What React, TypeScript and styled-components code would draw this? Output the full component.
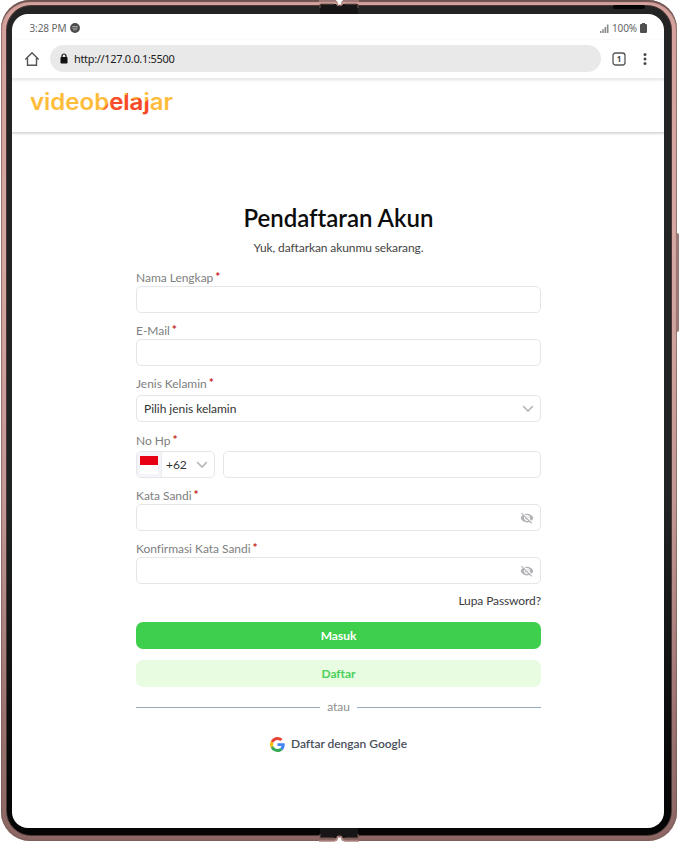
import React from 'react';
import styled, { createGlobalStyle, css } from 'styled-components';

const GlobalStyle = createGlobalStyle`
  *, *::before, *::after { box-sizing: border-box; }
  body { margin: 0; background: #fff; overflow: hidden; }
  button, input { font: inherit; letter-spacing: inherit; }
`;

const Device = styled.div`
  position: relative;
  width: 679px;
  height: 842px;
  padding: 0 2px 1px 1px;
  font-family: Lato, 'Liberation Sans', sans-serif;
`;

const Shell = styled.div`
  height: 841px;
  padding: 5px;
  border-radius: 29px;
  background: linear-gradient(180deg, #d5a29d 0%, #d5a8a3 30%, #c29894 60%, #9b7471 85%, #8b6663 100%);
  box-shadow: inset 0 0 1px 1px #70565490, inset 0 2px 1px #69504e;
`;

const Bezel = styled.div`
  height: 831px;
  padding: 8px 7px 7px 5px;
  border: 1px solid #4c3837;
  border-radius: 25px;
  background: linear-gradient(180deg, #242424 0%, #202323 60%, #090909 90%, #050505 100%);
`;

const Screen = styled.main`
  height: 814px;
  border-radius: 16px;
  background: #fff;
  overflow: hidden;
`;

const Hinge = styled.svg<{ $end?: boolean }>`
  position: absolute;
  left: 317px;
  width: 44px;
  height: 14px;
  ${({ $end }) => ($end ? css`bottom: 0; transform: scaleY(-1);` : css`top: 0;`)}
`;

const Antenna = styled.span<{ $end?: boolean }>`
  position: absolute;
  left: 613px;
  width: 32px;
  height: 4px;
  border-radius: 2px;
  background: #050505;
  ${({ $end }) => ($end ? css`bottom: 7px;` : css`top: 5px;`)}
`;

const PowerKey = styled.span`
  position: absolute;
  top: 233px;
  right: 0;
  width: 2px;
  height: 99px;
  border-radius: 0 2px 2px 0;
  background: #9b7775;
`;

const StatusBar = styled.div`
  display: flex;
  align-items: center;
  justify-content: space-between;
  height: 26px;
  padding: 2px 17px 0 17.5px;
  font: 10px/12px 'Noto Sans', sans-serif;
  letter-spacing: -0.1px;
  color: #666;
`;

const StatusGroup = styled.div<{ $gap: number }>`
  display: flex;
  align-items: center;
  gap: ${({ $gap }) => $gap}px;
`;

const BrowserBar = styled.div`
  display: flex;
  align-items: center;
  height: 39px;
  padding: 0 13px 1px 12px;
  border-bottom: 1px solid #ececec;
  box-shadow: 0 1px 3px #0000001f;
`;

const Address = styled.div`
  display: flex;
  align-items: center;
  gap: 6px;
  width: 551px;
  height: 27px;
  margin: 0 10px;
  padding: 0 10px;
  border-radius: 14px;
  background: #e9e9e9;
  color: #202020;
  font: 11px/14px 'Noto Sans', sans-serif;
  letter-spacing: -0.33px;
`;

const BrowserActions = styled.div`
  display: flex;
  align-items: center;
  gap: 17px;
  margin-left: 1px;
`;

const SiteHeader = styled.header`
  height: 54px;
  padding: 7px 18px;
  border-bottom: 1px solid #d9d9d9;
  box-shadow: 0 1px 2px #00000026;
`;

const Logo = styled.svg`
  display: block;
  width: 146px;
  height: 32px;
`;

const Form = styled.form`
  display: flex;
  flex-direction: column;
  width: 405px;
  margin: 69px 0 0 124px;
  font-size: 12px;
  line-height: 16px;
  letter-spacing: -0.03px;
  color: #333;
`;

const Title = styled.h1`
  margin: 0;
  text-align: center;
  font-size: 24px;
  line-height: 32px;
  font-weight: 600;
  font-variant-ligatures: none;
  color: #0c0c0c;
`;

const Subtitle = styled.p`
  margin: 6px 0 14px;
  text-align: center;
  letter-spacing: -0.1px;
  color: #444;
`;

const Field = styled.div<{ $height: number; $gap: number }>`
  display: flex;
  flex-direction: column;
  justify-content: space-between;
  height: ${({ $height }) => $height}px;
  margin-bottom: ${({ $gap }) => $gap}px;
`;

const Label = styled.label`
  height: 16px;
  color: #808080;
`;

const Required = styled.span`
  margin-left: 2px;
  position: relative;
  top: -1px;
  font-weight: 700;
  color: #c5221a;
`;

const ControlRow = styled.div`
  display: flex;
  gap: 8px;
`;

const box = css`
  height: 27px;
  border: 1px solid #e6e6e8;
  border-radius: 5px;
  background: #fff;
`;

const InputBox = styled.div`
  ${box}
  display: flex;
  flex: 1;
  align-items: center;
  padding: 0 6px 0 8px;
`;

const Input = styled.input`
  flex: 1;
  min-width: 0;
  height: 23px;
  padding: 0;
  border: 0;
  outline: 0;
  background: transparent;
`;

const SelectBox = styled.div`
  ${box}
  display: flex;
  flex: 1;
  align-items: center;
  justify-content: space-between;
  padding: 0 6px 0 7px;
`;

const DialCode = styled.div`
  ${box}
  display: flex;
  align-items: center;
  width: 79px;
  padding-right: 6px;
  overflow: hidden;
`;

const FlagCell = styled.span`
  display: flex;
  justify-content: center;
  width: 25px;
  height: 25px;
  padding-top: 4px;
  border-right: 1px solid #ececf0;
  background: #f4f4fa;
`;

const Flag = styled.span`
  width: 18px;
  height: 18px;
  background: linear-gradient(#e70014 50%, #fff 50%);
`;

const Code = styled.span`
  flex: 1;
  padding-left: 4px;
`;

const Forgot = styled.a`
  align-self: flex-end;
  margin: 1px 0 13px;
  letter-spacing: -0.1px;
  color: #3b3b3b;
`;

const Button = styled.button<{ $soft?: boolean }>`
  height: 27px;
  margin: 0 0 11px;
  padding: 0;
  border: 0;
  border-radius: 7px;
  background: ${({ $soft }) => ($soft ? '#e8fce2' : '#3ecf4c')};
  color: ${({ $soft }) => ($soft ? '#4bd05b' : '#fff')};
  font-weight: 700;
`;

const Divider = styled.div`
  display: flex;
  align-items: center;
  gap: 7px;
  margin-top: 1px;
  color: #8d8d8d;

  &::before, &::after {
    content: '';
    flex: 1;
    height: 1px;
    background: #94a9bb;
  }
`;

const GoogleButton = styled.button`
  display: flex;
  align-items: center;
  justify-content: center;
  gap: 6px;
  margin-top: 21px;
  padding: 0;
  border: 0;
  background: none;
  color: #4a505c;
  font-weight: 600;
`;

const HingeArt = ({ end }: { end?: boolean }) => (
  <Hinge $end={end} viewBox="0 0 44 14">
    <path d="M3 4H19L21 7H24L26 4H41V14H3Z" fill="#171515" />
    <path d="M2 1H17Q21 2 21 6M24 6Q24 2 28 1H42" fill="none" stroke="#b08782" strokeWidth="1.5" />
    <path d="M3 4V8M41 4V8M4 4H17M28 4H40" fill="none" stroke="#755752" strokeWidth="1" />
    <path d="M18.5 0H26.5Q24 1.5 23.8 4.4H21.3Q21 1.5 18.5 0Z" fill="#fff" />
  </Hinge>
);

const Chevron = () => (
  <svg width="12" height="8" viewBox="0 0 12 8" fill="none" stroke="#b8b9bc" strokeWidth="1.7">
    <path d="m1.2 1.2 4.8 4.9 4.8-4.9" />
  </svg>
);

const EyeOff = () => (
  <svg width="14" height="14" viewBox="0 0 24 24" fill="#b2b3b7">
    <path d="M12 7c2.76 0 5 2.24 5 5 0 .65-.13 1.26-.36 1.83l2.92 2.92c1.51-1.26 2.7-2.89 3.43-4.75-1.73-4.39-6-7.5-11-7.5-1.4 0-2.74.25-3.98.7l2.16 2.16C10.74 7.13 11.35 7 12 7zM2 4.27l2.28 2.28.46.46C3.08 8.3 1.78 10.02 1 12c1.73 4.39 6 7.5 11 7.5 1.55 0 3.03-.3 4.38-.84l.42.42L19.73 22 21 20.73 3.27 3 2 4.27zM7.53 9.8l1.55 1.55c-.05.21-.08.43-.08.65 0 1.66 1.34 3 3 3 .22 0 .44-.03.65-.08l1.55 1.55c-.67.33-1.41.53-2.2.53-2.76 0-5-2.24-5-5 0-.79.2-1.53.53-2.2zm4.31-.78 3.15 3.15.02-.16c0-1.66-1.34-3-3-3l-.17.01z" />
  </svg>
);

const GoogleMark = () => (
  <svg width="15" height="15" viewBox="0 0 48 48">
    <path fill="#ea4335" d="M24 9.5c3.54 0 6.71 1.22 9.21 3.6l6.85-6.85C35.9 2.38 30.47 0 24 0 14.62 0 6.51 5.38 2.56 13.22l7.98 6.19C12.43 13.72 17.74 9.5 24 9.5z" />
    <path fill="#4285f4" d="M46.98 24.55c0-1.57-.15-3.09-.38-4.55H24v9.02h12.94c-.58 2.96-2.26 5.48-4.78 7.18l7.73 6c4.51-4.18 7.09-10.36 7.09-17.65z" />
    <path fill="#fbbc05" d="M10.53 28.59A14.5 14.5 0 0 1 9.77 24c0-1.6.27-3.14.76-4.59l-7.98-6.19A24 24 0 0 0 0 24c0 3.88.92 7.54 2.56 10.78l7.97-6.19z" />
    <path fill="#34a853" d="M24 48c6.48 0 11.93-2.13 15.89-5.81l-7.73-6c-2.15 1.45-4.92 2.3-8.16 2.3-6.26 0-11.57-4.22-13.47-9.91l-7.98 6.19C6.51 42.62 14.62 48 24 48z" />
  </svg>
);

type FieldProps = { label: string; children: React.ReactNode; height?: number; gap?: number };

const FormField = ({ label, children, height = 43, gap = 10 }: FieldProps) => (
  <Field $height={height} $gap={gap}>
    <Label>{label}<Required>*</Required></Label>
    <ControlRow>{children}</ControlRow>
  </Field>
);

export default function App() {
  return (
    <Device>
      <GlobalStyle />
      <Shell>
        <Bezel>
          <Screen>
            <StatusBar>
              <StatusGroup $gap={4}>
                <span>3:28 PM</span>
                <svg width="10" height="10" viewBox="0 0 10 10">
                  <circle cx="5" cy="5" r="4.9" fill="#4b4b4b" />
                  <path d="M2.2 3.7Q5 3 8 3.9M2.5 5.3Q5 4.7 7.4 5.5M3 6.9Q5 6.3 6.8 7" fill="none" stroke="#bbb" strokeWidth=".8" />
                </svg>
              </StatusGroup>
              <StatusGroup $gap={3}>
                <svg width="9" height="9" viewBox="0 0 9 9" fill="#8c8c8c">
                  <path d="M0 7h1.5v2H0zM2.2 5.2h1.6V9H2.2zM4.5 3h1.6v6H4.5zM6.8.5h1.7V9H6.8z" />
                </svg>
                <span>100%</span>
                <svg width="7" height="10" viewBox="0 0 7 10" fill="#505050">
                  <path d="M2 0h3v1h1q1 0 1 1v7q0 1-1 1H1q-1 0-1-1V2q0-1 1-1h1z" />
                </svg>
              </StatusGroup>
            </StatusBar>
            <BrowserBar>
              <svg width="16" height="16" viewBox="0 0 16 16" fill="none" stroke="#555" strokeWidth="1.4">
                <path d="M1.3 8.6 8 1.8l6.7 6.8M3.5 7v7.3h9V7" />
              </svg>
              <Address>
                <svg width="8" height="11" viewBox="0 0 8 11">
                  <path d="M2 5V3a2 2 0 0 1 4 0v2" fill="none" stroke="#111" strokeWidth="1.2" />
                  <rect x=".5" y="4" width="7" height="6.5" rx=".8" fill="#111" />
                </svg>
                <span>http://127.0.0.1:5500</span>
              </Address>
              <BrowserActions>
                <svg width="14" height="14" viewBox="0 0 14 14">
                  <rect x="1" y="1" width="12" height="12" rx="2.5" fill="none" stroke="#555" strokeWidth="1.3" />
                  <text x="7" y="9.8" textAnchor="middle" fontFamily="Noto Sans" fontSize="8" fontWeight="700" fill="#444">1</text>
                </svg>
                <svg width="4" height="12" viewBox="0 0 4 12" fill="#4a4a4a">
                  <circle cx="2" cy="1.5" r="1.5" />
                  <circle cx="2" cy="6" r="1.5" />
                  <circle cx="2" cy="10.5" r="1.5" />
                </svg>
              </BrowserActions>
            </BrowserBar>
            <SiteHeader>
              <Logo viewBox="0 0 146 32">
                <defs>
                  <linearGradient id="brand" gradientUnits="userSpaceOnUse" x1="0" x2="146" y1="0" y2="0">
                    <stop offset="0.5" stopColor="#fb7a35" />
                    <stop offset="0.57" stopColor="#f84a2e" />
                    <stop offset="1" stopColor="#f8432c" />
                  </linearGradient>
                  <clipPath id="swoosh">
                    <path d="M70 27 80 15V9H97V1H102V13L110 12 114 17 120 12V32H70Z" />
                  </clipPath>
                </defs>
                <text x="0" y="23.5" fontFamily="Inter" fontSize="22.5" fontWeight="600" textLength="143" lengthAdjust="spacingAndGlyphs" fill="#ffbc3b">videobelajar</text>
                <text x="0" y="23.5" fontFamily="Inter" fontSize="22.5" fontWeight="600" textLength="143" lengthAdjust="spacingAndGlyphs" fill="url(#brand)" clipPath="url(#swoosh)" aria-hidden="true">videobelajar</text>
              </Logo>
            </SiteHeader>
            <Form onSubmit={(event) => event.preventDefault()}>
              <Title>Pendaftaran Akun</Title>
              <Subtitle>Yuk, daftarkan akunmu sekarang.</Subtitle>
              <FormField label="Nama Lengkap">
                <InputBox><Input aria-label="Nama Lengkap" /></InputBox>
              </FormField>
              <FormField label="E-Mail">
                <InputBox><Input type="email" aria-label="E-Mail" /></InputBox>
              </FormField>
              <FormField label="Jenis Kelamin" height={46} gap={11}>
                <SelectBox><span>Pilih jenis kelamin</span><Chevron /></SelectBox>
              </FormField>
              <FormField label="No Hp" height={45}>
                <DialCode>
                  <FlagCell><Flag /></FlagCell>
                  <Code>+62</Code>
                  <Chevron />
                </DialCode>
                <InputBox><Input type="tel" aria-label="No Hp" /></InputBox>
              </FormField>
              <FormField label="Kata Sandi">
                <InputBox><Input type="password" aria-label="Kata Sandi" /><EyeOff /></InputBox>
              </FormField>
              <FormField label="Konfirmasi Kata Sandi" gap={8}>
                <InputBox><Input type="password" aria-label="Konfirmasi Kata Sandi" /><EyeOff /></InputBox>
              </FormField>
              <Forgot>Lupa Password?</Forgot>
              <Button type="submit">Masuk</Button>
              <Button type="button" $soft>Daftar</Button>
              <Divider>atau</Divider>
              <GoogleButton type="button"><GoogleMark />Daftar dengan Google</GoogleButton>
            </Form>
          </Screen>
        </Bezel>
      </Shell>
      <HingeArt />
      <HingeArt end />
      <Antenna />
      <Antenna $end />
      <PowerKey />
    </Device>
  );
}
